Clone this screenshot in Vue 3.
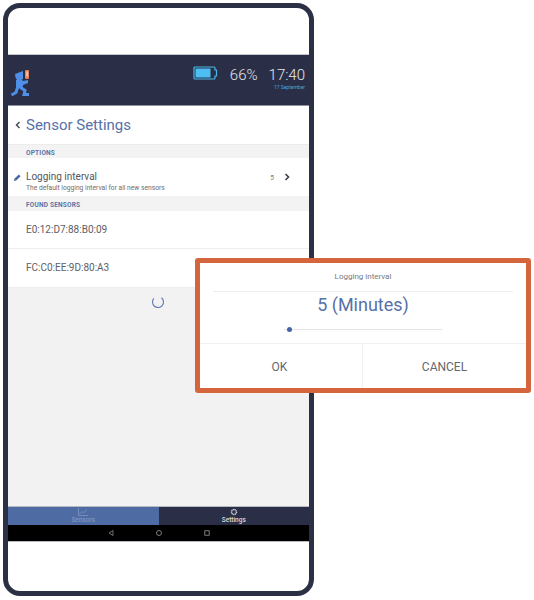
<template>
  <div class="page">
    <div class="phone">
      <div class="bezel-top"></div>
      <header class="topbar">
        <svg class="logo" viewBox="0 0 22 30" width="22" height="30">
          <path fill="#4f8fe8" d="M5 6l8-3v8l-2 1H7L5.500 9.500z" />
          <path fill="#4f8fe8" d="M6 12h6l1 1 5-1v3l-5 2-.5 3.500H6z" />
          <path d="M10.500 19.500l4.500 3-1 4 5 0M7.500 19.500l-1.500 5-4.500 2.500" fill="none" stroke="#4f8fe8" stroke-width="3" />
          <rect x="15" y="2" width="4" height="9" rx="1" fill="#e2835a" />
          <rect x="16.500" y="3.500" width="1.200" height="5" fill="#f6e3d6" />
        </svg>
        <div class="status">
          <svg class="battery" viewBox="0 0 25 14" width="25" height="14">
            <path fill="none" stroke="#46b7ea" stroke-width="1.200" d="M2 1h19a1 1 0 0 1 1 1v2h1.500v6H22v2a1 1 0 0 1-1 1H2a1 1 0 0 1-1-1V2a1 1 0 0 1 1-1z" />
            <rect x="2.500" y="2.500" width="15" height="9" fill="#4cbef2" />
          </svg>
          <span class="pct">66%</span>
          <div class="clock">
            <span class="time">17:40</span>
            <span class="date">17 September</span>
          </div>
        </div>
      </header>

      <main class="content">
        <div class="title-row">
          <svg viewBox="0 0 6 8" width="6" height="8"><path d="M4.500 1L1.500 4l3 3" fill="none" stroke="#4a4d57" stroke-width="1.500" /></svg>
          <h1>Sensor Settings</h1>
        </div>

        <div class="section">OPTIONS</div>
        <div class="row option">
          <svg class="pencil" viewBox="0 0 8 8" width="7" height="7"><path fill="#4a67a1" d="M0 8l.5-2.500L5.500.5l2 2-5 5z" /></svg>
          <div class="option-text">
            <div class="name">Logging interval</div>
            <div class="desc">The default logging interval for all new sensors</div>
          </div>
          <span class="value">5</span>
          <svg class="chev" viewBox="0 0 6 8" width="6" height="8"><path d="M1.500 1l3 3-3 3" fill="none" stroke="#3c3f48" stroke-width="1.600" /></svg>
        </div>

        <div class="section found">FOUND SENSORS</div>
        <div v-for="s in sensors" :key="s" class="row sensor">{{ s }}</div>

        <div class="loading">
          <svg viewBox="0 0 14 14" width="14" height="14"><path d="M7 1.500A5.500 5.500 0 1 0 12.500 7" transform="rotate(-50 7 7)" fill="none" stroke="#5d78b0" stroke-width="1.100" /></svg>
        </div>
      </main>

      <nav class="tabs">
        <div class="tab active">
          <svg viewBox="0 0 10 8" width="10" height="8"><path d="M.500 0v7.500H10M1.500 6L4 3.500 5.500 5 9 1.500" fill="none" stroke="#7e95c2" stroke-width=".8" /></svg>
          <span>Sensors</span>
        </div>
        <div class="tab">
          <svg viewBox="0 0 8 8" width="8" height="8"><circle cx="4" cy="4" r="2.500" fill="none" stroke="#c9ccd4" stroke-width="1.500" stroke-dasharray="1.300 .4" /></svg>
          <span>Settings</span>
        </div>
      </nav>
      <div class="softkeys">
        <svg viewBox="0 0 6 6" width="6" height="6"><path d="M5 .5v5L1 3z" fill="none" stroke="#8b8b8b" stroke-width=".8" /></svg>
        <svg viewBox="0 0 6 6" width="6" height="6"><circle cx="3" cy="3" r="2.500" fill="none" stroke="#9b9b9b" stroke-width=".8" /></svg>
        <svg viewBox="0 0 6 6" width="6" height="6"><rect x=".8" y=".8" width="4.400" height="4.400" fill="none" stroke="#9b9b9b" stroke-width=".8" /></svg>
      </div>
      <div class="bezel-bottom"></div>
    </div>

    <div class="dialog">
      <div class="dialog-title">Logging interval</div>
      <div class="dialog-value">5 (Minutes)</div>
      <div class="slider"><span class="knob"></span></div>
      <div class="actions">
        <button class="ok">OK</button>
        <button class="cancel">CANCEL</button>
      </div>
    </div>
  </div>
</template>

<script setup>
const sensors = ['E0:12:D7:88:B0:09', 'FC:C0:EE:9D:80:A3']
</script>

<style>
body {
  background: #fff;
}
</style>

<style scoped>
.page {
  position: relative;
  width: 534px;
  height: 600px;
  padding: 3px 0 0 3px;
  box-sizing: border-box;
  overflow: hidden;
  font-family: Roboto, "Liberation Sans", sans-serif;
}

.phone {
  width: 311px;
  height: 593px;
  box-sizing: border-box;
  border: 5px solid #2b3044;
  border-radius: 17px;
  background: #fff;
  display: flex;
  flex-direction: column;
  overflow: hidden;
}

.bezel-top {
  height: 47px;
  flex: none;
  border-bottom: 1px solid #c4c6cc;
  box-sizing: border-box;
}

.bezel-bottom {
  height: 50px;
  flex: none;
  border-top: 1px solid #b9bbc2;
  box-sizing: border-box;
}

.topbar {
  height: 51px;
  flex: none;
  background: #2a2f47;
  border-bottom: 1px solid #8e92a0;
  box-sizing: border-box;
  display: flex;
  justify-content: space-between;
  padding: 11px 4px 0 2px;
}

.logo {
  margin-top: 2px;
}

.status {
  display: flex;
  align-items: flex-start;
  color: #e6e7ea;
}

.battery {
  margin: 0 12px 0 0;
}

.pct {
  font-size: 15px;
  line-height: 18px;
  margin-right: 11px;
  font-weight: 300;
}

.clock {
  display: flex;
  flex-direction: column;
  align-items: flex-end;
}

.time {
  font-size: 15px;
  line-height: 18px;
  font-weight: 300;
}

.date {
  font-size: 5px;
  line-height: 6px;
  color: #46a6dc;
}

.content {
  flex: 1;
  background: #f2f2f2;
  display: flex;
  flex-direction: column;
}

.title-row {
  height: 38px;
  flex: none;
  background: #fff;
  display: flex;
  align-items: center;
  gap: 5px;
  padding-left: 7px;
}

h1 {
  margin: 0;
  font-size: 15px;
  font-weight: 400;
  color: #5871a6;
}

.section {
  height: 14px;
  flex: none;
  box-sizing: border-box;
  padding: 4px 0 0 18px;
  background: #f3f3f3;
  border-top: 1px solid #ececec;
  font-size: 6.500px;
  font-weight: 700;
  line-height: 9px;
  color: #5a73a8;
  letter-spacing: .2px;
}

.found {
  height: 15px;
  border-top: none;
  padding-top: 5px;
}

.row {
  background: #fff;
  flex: none;
}

.option {
  height: 38px;
  display: flex;
  align-items: center;
  padding-left: 6px;
  position: relative;
}

.pencil {
  margin-right: 5px;
}

.option-text {
  flex: 1;
  padding-top: 9px;
}

.name {
  font-size: 10px;
  line-height: 12px;
  color: #54565c;
}

.desc {
  font-size: 6.700px;
  line-height: 9px;
  margin-top: 1px;
  color: #6c6e74;
}

.value {
  font-size: 6.500px;
  color: #7a7c82;
  margin: 2px 10px 0 0;
}

.chev {
  margin: 0 19px 0 0;
}

.sensor {
  height: 38px;
  box-sizing: border-box;
  border-bottom: 1px solid #eee;
  padding: 12px 0 0 18px;
  font-size: 10px;
  line-height: 14px;
  color: #5e6066;
}

.sensor + .sensor {
  height: 39px;
}

.loading {
  padding: 7px 2px 0 0;
  display: flex;
  justify-content: center;
}

.tabs {
  height: 19px;
  flex: none;
  display: flex;
  border-top: 1px solid #b9bbc2;
  box-sizing: border-box;
}

.tab {
  flex: 1;
  background: #2a2f47;
  color: #d8dade;
  font-size: 6.500px;
  font-weight: 500;
  display: flex;
  flex-direction: column;
  align-items: center;
  line-height: 8px;
  padding-top: 1px;
}

.tab.active {
  background: #4f6ba3;
  color: #7e95c2;
}

.tabs svg {
  display: block;
}

.softkeys {
  height: 16px;
  flex: none;
  background: #000;
  display: flex;
  align-items: center;
  justify-content: center;
  gap: 42px;
}

.dialog {
  position: absolute;
  left: 195px;
  top: 258px;
  width: 336px;
  height: 135px;
  box-sizing: border-box;
  border: 5px solid #d4653c;
  border-radius: 3px;
  background: #fff;
  display: flex;
  flex-direction: column;
}

.dialog-title {
  height: 29px;
  box-sizing: border-box;
  margin: 0 13px;
  padding-top: 9px;
  border-bottom: 1px solid #eee;
  text-align: center;
  font-size: 8px;
  line-height: 10px;
  color: #77797e;
}

.dialog-value {
  margin-top: 1px;
  height: 24px;
  text-align: center;
  font-size: 18px;
  line-height: 24px;
  font-weight: 400;
  color: #5871a6;
}

.slider {
  position: relative;
  height: 1px;
  margin: 12px 84px 0 84px;
  background: #e4e4e8;
}

.knob {
  position: absolute;
  left: 3px;
  top: -2px;
  width: 5px;
  height: 5px;
  border-radius: 50%;
  background: #4465a8;
}

.actions {
  margin-top: 13px;
  flex: 1;
  display: flex;
  border-top: 1px solid #efefef;
}

.actions button {
  border: none;
  background: #fff;
  font: 400 12px Roboto, "Liberation Sans", sans-serif;
  color: #66686c;
  padding: 2px 0 0 0;
}

.actions .ok {
  width: 162px;
  flex: none;
  padding-right: 3px;
}

.actions .cancel {
  flex: 1;
  border-left: 1px solid #efefef;
}
</style>
